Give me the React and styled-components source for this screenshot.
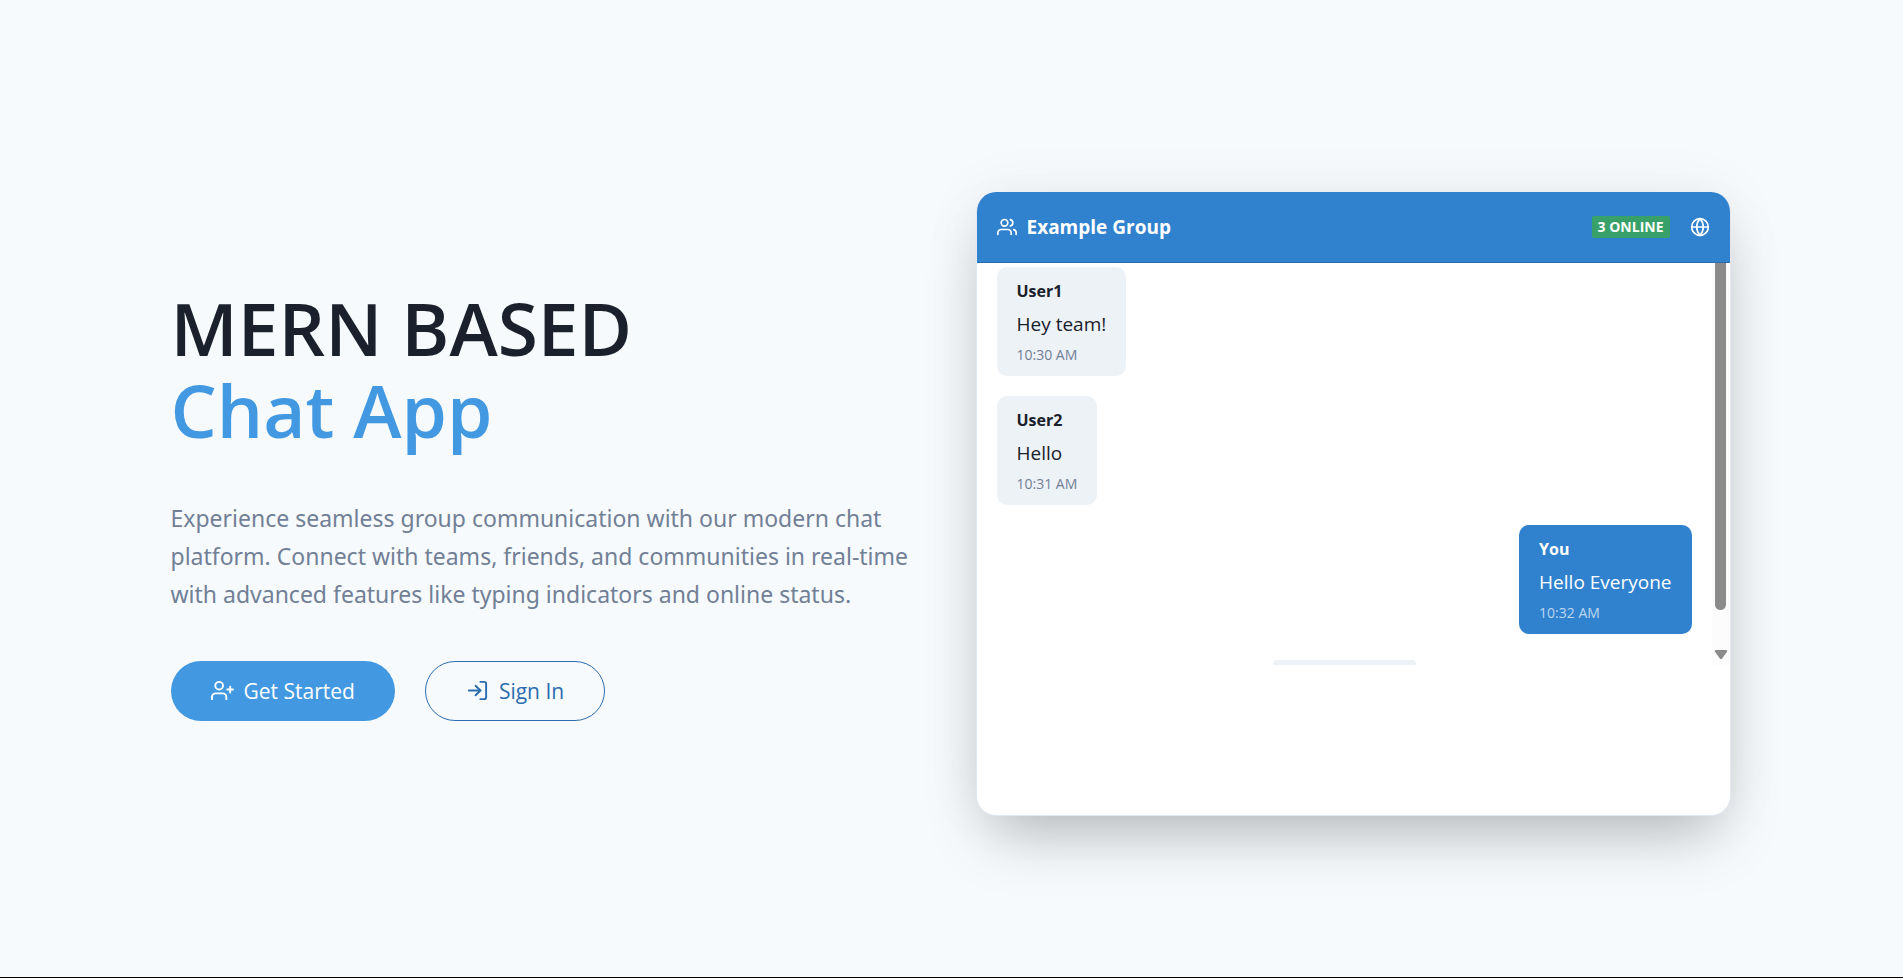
import React from "react";
import styled, { createGlobalStyle, css } from "styled-components";
import { FiUserPlus, FiLogIn, FiUsers, FiGlobe } from "react-icons/fi";

const GlobalStyle = createGlobalStyle`
  *, *::before, *::after { box-sizing: border-box; }
  body {
    margin: 0;
    background: #f6fafd;
    color: #1a202c;
    font-family: "Open Sans", "Noto Sans", sans-serif;
    font-size: 20px;
    line-height: 30px;
  }
  h1, h2, p { margin: 0; }
`;

const Page = styled.main`
  min-height: 100vh;
  display: flex;
  align-items: center;
  justify-content: center;
  padding: 30px 2px 0 0;
  background: #f6fafd;
  border-bottom: 1px solid #000;
`;

const Hero = styled.div`
  width: 100%;
  max-width: 1560px;
  display: grid;
  grid-template-columns: repeat(2, minmax(0, 1fr));
  column-gap: 50px;
  align-items: center;
`;

const Intro = styled.section`
  display: flex;
  flex-direction: column;
  gap: 48px;
`;

const Title = styled.h1`
  font-size: 73px;
  line-height: 82px;
  font-weight: 600;
`;

const TitleLine = styled.span`
  display: block;
  color: ${(p) => (p.$accent ? "#4299e1" : "#1a202c")};
`;

const Lead = styled.p`
  font-family: "Noto Sans", "Open Sans", sans-serif;
  font-size: 23px;
  line-height: 38px;
  color: #718096;
`;

const LeadLine = styled.span`
  display: block;
  white-space: nowrap;
`;

const Actions = styled.div`
  display: flex;
  gap: 30px;
`;

const PillButton = styled.button`
  display: inline-flex;
  align-items: center;
  gap: 10px;
  height: 60px;
  padding: 0 40px;
  border-radius: 30px;
  border: 0;
  font-family: inherit;
  font-size: 21px;
  cursor: pointer;
  ${(p) =>
    p.$outline
      ? css`
          background: transparent;
          color: #2b6cb0;
          border: 1px solid #2b6cb0;
        `
      : css`
          background: #4299e1;
          color: #fff;
        `}
`;

const ChatCard = styled.section`
  height: 624px;
  overflow: hidden;
  border: 1px solid #e2e8f0;
  border-top: 0;
  border-radius: 20px;
  background: #fff;
  box-shadow: 0 31px 62px -15px rgba(0, 0, 0, 0.25), 0 0 60px rgba(0, 0, 0, 0.06);
`;

const ChatHeader = styled.header`
  display: flex;
  align-items: center;
  justify-content: space-between;
  height: 71px;
  padding: 0 20px;
  background: #3182ce;
  border-bottom: 1px solid #2b6cb0;
  color: #fff;
`;

const HeaderGroup = styled.div`
  display: flex;
  align-items: center;
  gap: ${(p) => p.$gap}px;
`;

const GroupName = styled.h2`
  font-size: 19px;
  line-height: 30px;
  font-weight: 700;
`;

const OnlineBadge = styled.span`
  padding: 0 6px;
  border-radius: 2px;
  background: #38a169;
  font-size: 14px;
  line-height: 22px;
  font-weight: 700;
`;

const ChatBody = styled.div`
  display: flex;
  height: 402px;
  overflow: hidden;
`;

const MessageList = styled.div`
  flex: 1;
  display: flex;
  flex-direction: column;
  gap: 20px;
  padding: 4px 20px 0;
`;

const Bubble = styled.article`
  flex: none;
  align-self: ${(p) => (p.$own ? "flex-end" : "flex-start")};
  padding: 10px 20px;
  border-radius: 10px;
  background: ${(p) => (p.$own ? "#3182ce" : "#edf2f7")};
  color: ${(p) => (p.$own ? "#fff" : "#1a202c")};
`;

const Author = styled.p`
  font-size: 16px;
  line-height: 28px;
  font-weight: 700;
`;

const MessageText = styled.p`
  font-size: 19px;
  line-height: 38px;
`;

const Time = styled.p`
  font-size: 14px;
  line-height: 23px;
  color: ${(p) => (p.$own ? "#bcd6ee" : "#718096")};
`;

const Notice = styled.div`
  flex: none;
  align-self: center;
  width: 143px;
  height: 30px;
  margin-top: 6px;
  border-radius: 4px;
  background: #edf2f7;
`;

const ScrollTrack = styled.div`
  display: flex;
  flex-direction: column;
  align-items: center;
  justify-content: space-between;
  width: 18px;
  padding-bottom: 5px;
  background: #fcfcfc;
`;

const ScrollThumb = styled.div`
  width: 11px;
  height: 347px;
  border-radius: 0 0 6px 6px;
  background: #8b8b8b;
`;

const messages = [
  { author: "User1", text: "Hey team!", time: "10:30 AM" },
  { author: "User2", text: "Hello", time: "10:31 AM" },
  { author: "You", text: "Hello Everyone", time: "10:32 AM", own: true },
];

export default function App() {
  return (
    <>
      <GlobalStyle />
      <Page>
        <Hero>
          <Intro>
            <Title>
              <TitleLine>MERN BASED</TitleLine>
              <TitleLine $accent>Chat App</TitleLine>
            </Title>
            <Lead>
              <LeadLine>Experience seamless group communication with our modern chat </LeadLine>
              <LeadLine>platform. Connect with teams, friends, and communities in real-time </LeadLine>
              <LeadLine>with advanced features like typing indicators and online status.</LeadLine>
            </Lead>
            <Actions>
              <PillButton type="button">
                <FiUserPlus size={23} aria-hidden="true" />
                Get Started
              </PillButton>
              <PillButton type="button" $outline>
                <FiLogIn size={23} aria-hidden="true" />
                Sign In
              </PillButton>
            </Actions>
          </Intro>
          <ChatCard>
            <ChatHeader>
              <HeaderGroup $gap={10}>
                <FiUsers size={20} aria-hidden="true" />
                <GroupName>Example Group</GroupName>
              </HeaderGroup>
              <HeaderGroup $gap={20}>
                <OnlineBadge>3 ONLINE</OnlineBadge>
                <FiGlobe size={20} aria-hidden="true" />
              </HeaderGroup>
            </ChatHeader>
            <ChatBody>
              <MessageList>
                {messages.map((m) => (
                  <Bubble key={m.time} $own={m.own}>
                    <Author>{m.author}</Author>
                    <MessageText>{m.text}</MessageText>
                    <Time $own={m.own}>{m.time}</Time>
                  </Bubble>
                ))}
                <Notice />
              </MessageList>
              <ScrollTrack aria-hidden="true">
                <ScrollThumb />
                <svg width="14" height="10" viewBox="0 0 14 10" fill="#8b8b8b">
                  <path d="M2 0h10c1.200 0 1.600 1 1 1.800L8.200 8.600c-.6.900-1.800.9-2.400 0L1 1.800C.4 1 .8 0 2 0z" />
                </svg>
              </ScrollTrack>
            </ChatBody>
          </ChatCard>
        </Hero>
      </Page>
    </>
  );
}
